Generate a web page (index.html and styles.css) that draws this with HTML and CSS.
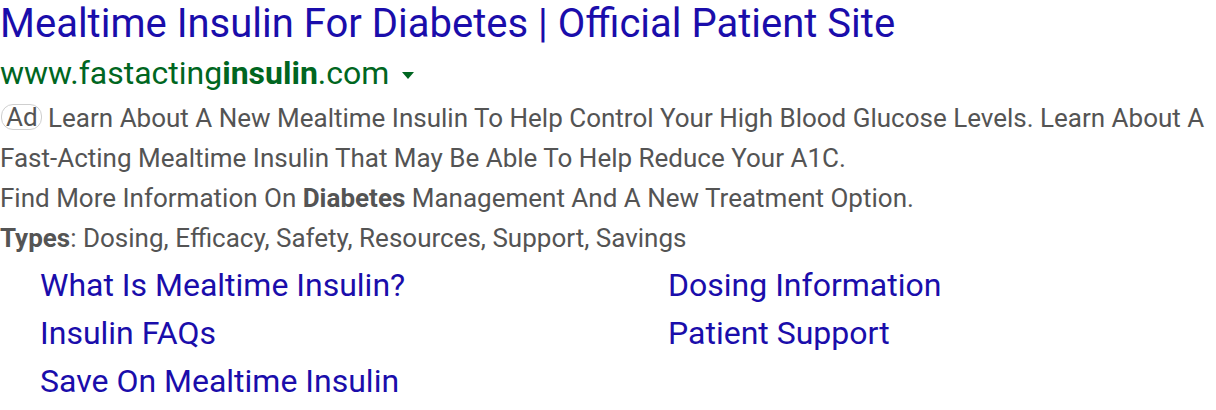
FILE: index.html
```html
<!DOCTYPE html>
<html>
<head>
<meta charset="utf-8">
<link rel="stylesheet" href="styles.css">
</head>
<body>
<div class="ad">
  <h1 class="title">Mealtime Insulin For Diabetes | Official Patient Site</h1>
  <div class="url">www.fastacting<b>insulin</b>.com<span class="caret"></span></div>
  <div class="desc">
    <p class="line"><span class="badge">Ad</span> Learn About A New Mealtime Insulin To Help Control Your High Blood Glucose Levels. Learn About A Fast-Acting Mealtime Insulin That May Be Able To Help Reduce Your A1C.</p>
    <p class="line">Find More Information On <b>Diabetes</b> Management And A New Treatment Option.</p>
    <p class="line"><b>Types</b>: Dosing, Efficacy, Safety, Resources, Support, Savings</p>
  </div>
  <div class="links">
    <a class="link">What Is Mealtime Insulin?</a>
    <a class="link">Dosing Information</a>
    <a class="link">Insulin FAQs</a>
    <a class="link">Patient Support</a>
    <a class="link">Save On Mealtime Insulin</a>
  </div>
</div>
</body>
</html>
```
FILE: styles.css
```css
html, body { margin: 0; padding: 0; background: #fff; }
body { font-family: Roboto, "Noto Sans", sans-serif; }
.ad { width: 1216px; }
.title {
  margin: 0;
  font-size: 40px;
  font-weight: 400;
  line-height: 48px;
  color: #1a0dab;
  white-space: nowrap;
}
.url {
  font-size: 32px;
  line-height: 50px;
  color: #006621;
  display: flex;
  align-items: center;
}
.url b { font-weight: 700; }
.caret {
  display: inline-block;
  width: 0; height: 0;
  border-left: 6px solid transparent;
  border-right: 6px solid transparent;
  border-top: 7px solid #006621;
  margin-left: 13px;
  margin-top: 4px;
}
.desc { color: #545454; font-size: 26px; line-height: 40px; }
.line { margin: 0; }
.desc b { font-weight: 700; color: #545454; }
.badge {
  display: inline-block;
  box-sizing: border-box;
  height: 26px;
  border: 1px solid #cfcfcf;
  border-radius: 12px;
  padding: 0 3px 0 4px;
  line-height: 24px;
  margin-left: 1px;
  vertical-align: 1px;
  color: #545454;
}
.links {
  margin-top: 3px;
  padding-left: 40px;
  display: grid;
  grid-template-columns: 628px 1fr;
}
.link {
  font-size: 32px;
  line-height: 48px;
  color: #1a0dab;
  white-space: nowrap;
}
```
